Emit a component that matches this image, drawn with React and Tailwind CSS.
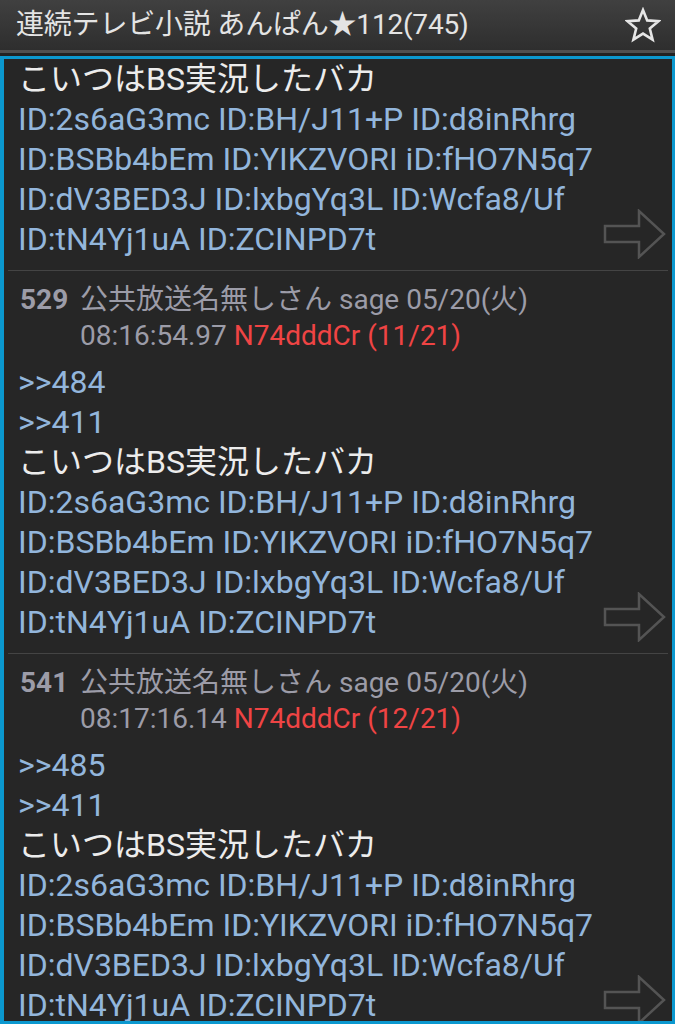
import React from 'react'

const FONT = { fontFamily: 'Roboto, "Noto Sans CJK JP", sans-serif' }

const idLines = [
  'ID:2s6aG3mc ID:BH/J11+P ID:d8inRhrg',
  'ID:BSBb4bEm ID:YIKZVORI iD:fHO7N5q7',
  'ID:dV3BED3J ID:lxbgYq3L ID:Wcfa8/Uf',
  'ID:tN4Yj1uA ID:ZCINPD7t',
]

function ArrowIcon() {
  return (
    <svg width="64" height="50" viewBox="0 0 64 50" className="absolute right-[-9px] bottom-[0px]">
      <path
        d="M2 17 H36 V2 L61 25 L36 48 V33 H2 Z"
        fill="none"
        stroke="#545454"
        strokeWidth="2.5"
        strokeLinejoin="miter"
      />
    </svg>
  )
}

function Body({ refs }) {
  return (
    <div className="relative text-[32px] leading-[40px]">
      {refs.map((r) => (
        <div key={r} className="text-[#93b6dc]">&gt;&gt;{r}</div>
      ))}
      <div className="text-[#ececec]">こいつはBS実況したバカ</div>
      {idLines.map((l) => (
        <div key={l} className="text-[#93b6dc]">{l}</div>
      ))}
      <ArrowIcon />
    </div>
  )
}

function Post({ num, time, count, refs }) {
  return (
    <div className="border-t border-[#444444] mx-[4px] px-[10px] pt-[11px] pb-[11px]">
      <div className="flex text-[28px] leading-[36px] text-[#9c9ca8]">
        <span className="w-[62px] shrink-0 pl-[2px] font-bold">{num}</span>
        <div>
          公共放送名無しさん sage 05/20(火)
          <br />
          {time} <span className="text-[#ef4444]">N74dddCr ({count})</span>
        </div>
      </div>
      <div className="mt-[8px]">
        <Body refs={refs} />
      </div>
    </div>
  )
}

export default function App() {
  return (
    <div className="w-[675px] h-[1024px] overflow-hidden bg-[#262626]" style={FONT}>
      {/* title bar */}
      <div className="h-[50px] bg-gradient-to-b from-[#404040] to-[#2e2e2e] flex items-center justify-between pl-[16px] pr-[14px]">
        <div className="text-[28px] text-[#e4e4e4] tracking-[-0.2px]">連続テレビ小説 あんぱん★112(745)</div>
        <svg width="36" height="36" viewBox="0 0 36 36">
          <polygon
            points="18,3 22.2,13.4 33.5,14.2 24.8,21.5 27.6,32.6 18,26.6 8.4,32.6 11.2,21.5 2.5,14.2 13.8,13.4"
            fill="none"
            stroke="#e6e6e6"
            strokeWidth="2.6"
            strokeLinejoin="miter"
          />
        </svg>
      </div>
      <div className="h-[3px] bg-[#505050]" />
      <div className="h-[3px] bg-[#222222]" />

      {/* thread panel */}
      <div className="h-[968px] border-[3px] border-l-[4px] border-[#0b98cf] overflow-hidden">
        <div className="px-[14px] pb-[11px]">
          <Body refs={[]} />
        </div>
        <Post num="529" time="08:16:54.97" count="11/21" refs={['484', '411']} />
        <Post num="541" time="08:17:16.14" count="12/21" refs={['485', '411']} />
      </div>
    </div>
  )
}
